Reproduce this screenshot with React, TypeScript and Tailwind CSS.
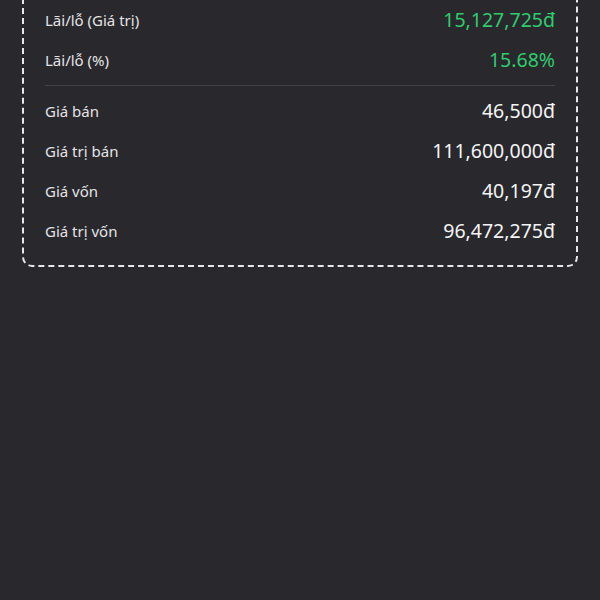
const rows = [
  { label: "Giá bán", value: "46,500đ" },
  { label: "Giá trị bán", value: "111,600,000đ" },
  { label: "Giá vốn", value: "40,197đ" },
  { label: "Giá trị vốn", value: "96,472,275đ" },
];

function Row({
  label,
  value,
  green,
}: {
  label: string;
  value: string;
  green?: boolean;
}) {
  return (
    <div className="flex h-[40px] items-center justify-between">
      <span className="text-[15px] text-[#e4e4e6]">{label}</span>
      <span
        className={
          green
            ? "text-[19.5px] text-[#2fcc6e]"
            : "text-[19.5px] text-[#f4f4f5]"
        }
      >
        {value}
      </span>
    </div>
  );
}

export default function App() {
  return (
    <div
      className="h-[600px] w-[600px] overflow-hidden bg-[#29282d]"
      style={{ fontFamily: '"Noto Sans", "Open Sans", sans-serif' }}
    >
      <div className="mx-[22px] -mt-[22px] rounded-[10px] border-2 border-dashed border-[#e8e8ea] pl-[21px] pr-[21px] pb-[14px] pt-[20px]">
        <Row label="Lãi/lỗ (Giá trị)" value="15,127,725đ" green />
        <Row label="Lãi/lỗ (%)" value="15.68%" green />
        <div className="my-[5px] h-px bg-[#434248]" />
        {rows.map((r) => (
          <Row key={r.label} label={r.label} value={r.value} />
        ))}
      </div>
    </div>
  );
}
